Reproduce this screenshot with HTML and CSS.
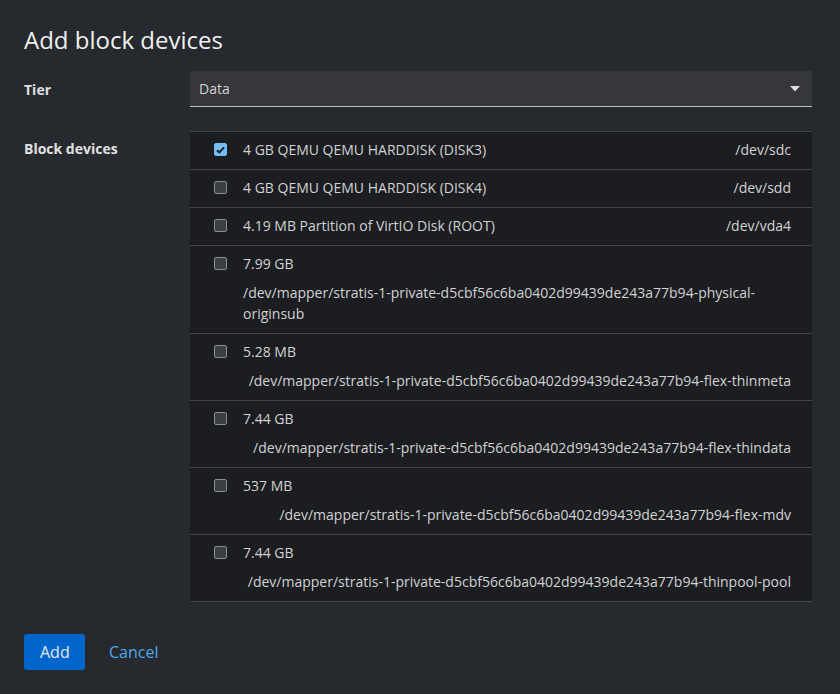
FILE: index.html
```html
<!DOCTYPE html>
<html>
<head>
<meta charset="utf-8">
<link rel="stylesheet" href="styles.css">
</head>
<body>
<div class="modal">
  <h1 class="title">Add block devices</h1>
  <div class="form">
    <div class="row-label tier-label">Tier</div>
    <div class="select">
      <span>Data</span>
      <svg class="caret" width="10" height="6" viewBox="0 0 10 6"><path d="M0 0 L10 0 L5 5.5 Z" fill="#e0e0e0"/></svg>
    </div>
    <div class="row-label bd-label">Block devices</div>
    <div class="table">
      <div class="tr">
        <span class="cb checked"><svg width="9" height="8" viewBox="0 0 9 8"><path d="M1 4.2 L3.4 6.5 L8 1.3" fill="none" stroke="#1b1d21" stroke-width="1.9"/></svg></span>
        <div class="cell"><span class="name">4 GB QEMU QEMU HARDDISK (DISK3)</span><span class="path">/dev/sdc</span></div>
      </div>
      <div class="tr">
        <span class="cb"></span>
        <div class="cell"><span class="name">4 GB QEMU QEMU HARDDISK (DISK4)</span><span class="path">/dev/sdd</span></div>
      </div>
      <div class="tr">
        <span class="cb"></span>
        <div class="cell"><span class="name">4.19 MB Partition of VirtIO Disk (ROOT)</span><span class="path">/dev/vda4</span></div>
      </div>
      <div class="tr">
        <span class="cb"></span>
        <div class="cell wrap"><span class="name">7.99 GB</span><span class="path">/dev/mapper/stratis-1-private-d5cbf56c6ba0402d99439de243a77b94-physical-originsub</span></div>
      </div>
      <div class="tr">
        <span class="cb"></span>
        <div class="cell wrap"><span class="name">5.28 MB</span><span class="path">/dev/mapper/stratis-1-private-d5cbf56c6ba0402d99439de243a77b94-flex-thinmeta</span></div>
      </div>
      <div class="tr">
        <span class="cb"></span>
        <div class="cell wrap"><span class="name">7.44 GB</span><span class="path">/dev/mapper/stratis-1-private-d5cbf56c6ba0402d99439de243a77b94-flex-thindata</span></div>
      </div>
      <div class="tr">
        <span class="cb"></span>
        <div class="cell wrap"><span class="name">537 MB</span><span class="path">/dev/mapper/stratis-1-private-d5cbf56c6ba0402d99439de243a77b94-flex-mdv</span></div>
      </div>
      <div class="tr">
        <span class="cb"></span>
        <div class="cell wrap"><span class="name">7.44 GB</span><span class="path">/dev/mapper/stratis-1-private-d5cbf56c6ba0402d99439de243a77b94-thinpool-pool</span></div>
      </div>
    </div>
  </div>
  <div class="footer">
    <button class="btn primary">Add</button>
    <button class="btn link">Cancel</button>
  </div>
</div>
</body>
</html>
```
FILE: styles.css
```css
html, body {
  margin: 0;
  padding: 0;
  background: #26292d;
}
body {
  font-family: "Open Sans", "Noto Sans", sans-serif;
  font-size: 14px;
  color: #d2d2d2;
}
.modal {
  width: 840px;
  height: 694px;
  box-sizing: border-box;
  padding: 24px 28px 0 24px;
}
.title {
  margin: 0;
  font-size: 24px;
  font-weight: 400;
  line-height: 31px;
  color: #f0f0f0;
}
.form {
  margin-top: 16px;
  display: grid;
  grid-template-columns: 166px 1fr;
  row-gap: 24px;
}
.row-label {
  font-weight: 700;
  color: #e0e0e0;
  line-height: 21px;
}
.tier-label {
  align-self: center;
}
.bd-label {
  padding-top: 7px;
}
.select {
  height: 36px;
  box-sizing: border-box;
  background: #36373a;
  border-bottom: 1px solid #b8bbbe;
  display: flex;
  align-items: center;
  justify-content: space-between;
  padding: 0 12px 0 9px;
  color: #d2d2d2;
}
.caret {
  display: block;
}
.table {
  background: #1b1d21;
  border-top: 1px solid #444548;
}
.tr {
  display: flex;
  align-items: flex-start;
  border-bottom: 1px solid #444548;
  padding: 7px 21px 9px 24px;
}
.cb {
  flex: none;
  width: 11px;
  height: 11px;
  margin-top: 4px;
  margin-right: 16px;
  border: 1px solid #8a8d90;
  border-radius: 2px;
  background: #3c3f42;
  display: flex;
  align-items: center;
  justify-content: center;
}
.cb.checked {
  background: #73bcf7;
  border-color: #73bcf7;
}
.cell {
  flex: 1;
  min-width: 0;
  display: flex;
  flex-wrap: wrap;
  justify-content: space-between;
  line-height: 21px;
}
.cell.wrap {
  row-gap: 8px;
}
.cell.wrap .name {
  flex-basis: 100%;
}
.path {
  margin-left: auto;
  color: #d2d2d2;
}
.footer {
  margin-top: 32px;
  display: flex;
  gap: 8px;
}
.btn {
  font-family: inherit;
  font-size: 16px;
  border: none;
  height: 36px;
  padding: 0 16px;
  border-radius: 3px;
  cursor: pointer;
}
.primary {
  background: #0066cc;
  color: #e8e8e8;
  width: 61px;
}
.link {
  background: transparent;
  color: #4ca7f0;
}
```
